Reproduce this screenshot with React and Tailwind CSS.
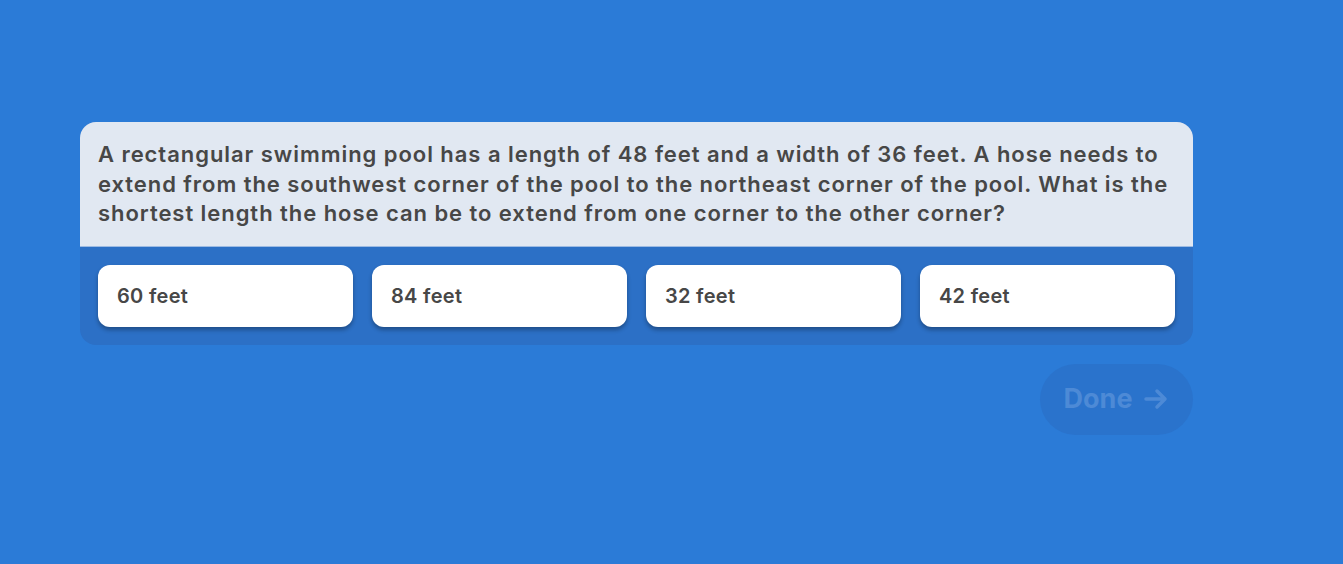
import React from "react";

const answers = ["60 feet", "84 feet", "32 feet", "42 feet"];

const lines = [
  "A rectangular swimming pool has a length of 48 feet and a width of 36 feet. A hose needs to",
  "extend from the southwest corner of the pool to the northeast corner of the pool. What is the",
  "shortest length the hose can be to extend from one corner to the other corner?",
];

export default function App() {
  return (
    <div
      className="w-full h-[564px] bg-[#2b7bd7] pt-[122px] pl-[80px]"
      style={{ fontFamily: "Inter, 'Open Sans', sans-serif" }}
    >
      <div className="w-[1113px] rounded-[16px] bg-[#2c70c6] overflow-hidden">
        <div className="bg-[#e1e8f2] px-[18px] pt-[18px] pb-[17px] border-b border-[#9dbbe3]">
          <p className="text-[22px] leading-[29.5px] font-semibold text-[#474747] tracking-[0.95px]">
            {lines.map((l) => (
              <span key={l} className="block whitespace-nowrap">
                {l}
              </span>
            ))}
          </p>
        </div>
        <div className="grid grid-cols-4 gap-[19px] p-[18px]">
          {answers.map((a) => (
            <button
              key={a}
              className="h-[62px] rounded-[12px] bg-white text-left pl-[19px] text-[20px] font-semibold tracking-[0.3px] text-[#474747] shadow-[0_3px_4px_rgba(0,0,0,0.3)]"
            >
              {a}
            </button>
          ))}
        </div>
      </div>
      <div className="w-[1113px] flex justify-end mt-[19px]">
        <button className="w-[153px] h-[71px] rounded-full bg-[#2a73cc] flex items-center justify-center gap-[11px] text-[27px] font-bold text-[#4d8ad6]">
          <span>Done</span>
          <svg width="26" height="22" viewBox="0 0 26 22" fill="none" stroke="#4d8ad6" strokeWidth="3.5" strokeLinecap="round" strokeLinejoin="round">
            <path d="M3 11h19M14 3l8 8-8 8" />
          </svg>
        </button>
      </div>
    </div>
  );
}
